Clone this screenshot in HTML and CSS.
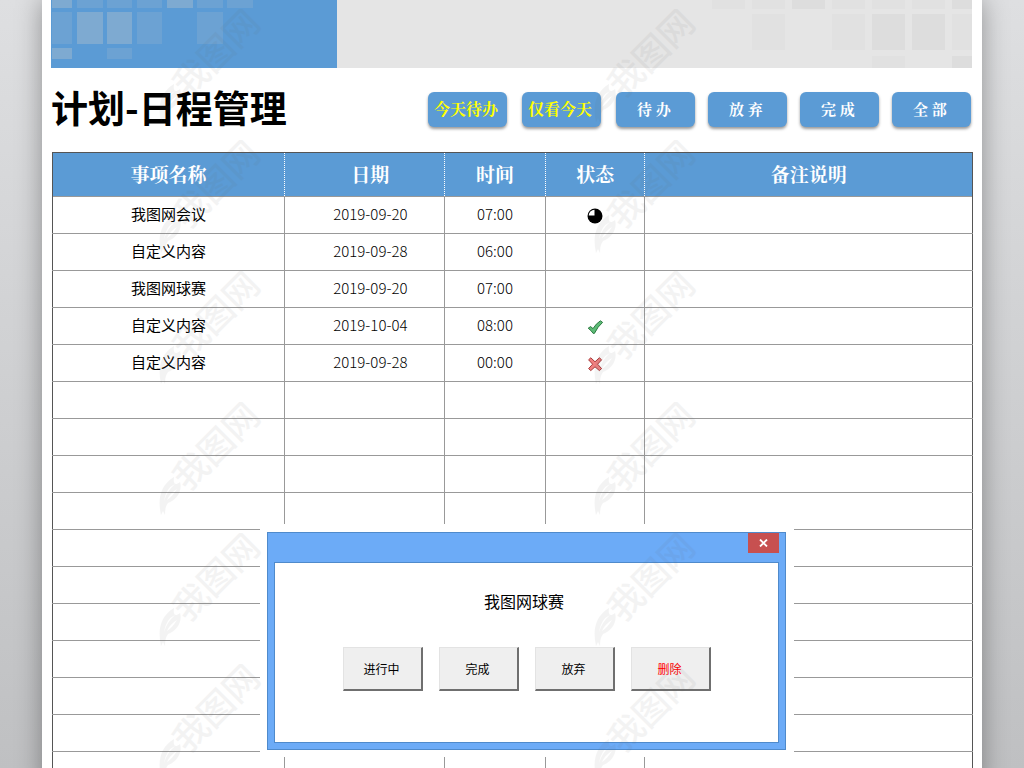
FILE: index.html
```html
<!DOCTYPE html>
<html lang="zh-CN">
<head>
<meta charset="utf-8">
<title>计划-日程管理</title>
<link rel="stylesheet" href="styles.css">
</head>
<body>
<div class="page">
  <main class="sheet">
    <div class="banner">
      <div class="banner-main">
        <svg class="tiles" width="204" height="68" viewBox="0 0 204 68" fill="#b9c4cc" aria-hidden="true">
          <g opacity=".38"><rect x="1" y="0" width="20" height="8"/><rect x="26" y="12" width="26" height="32"/><rect x="56" y="12" width="25" height="32"/><rect x="116" y="0" width="26" height="8"/><rect x="1" y="48" width="20" height="11"/></g>
          <g opacity=".18"><rect x="1" y="12" width="20" height="32"/><rect x="26" y="0" width="26" height="8"/><rect x="56" y="0" width="25" height="8"/><rect x="86" y="0" width="25" height="8"/><rect x="86" y="12" width="25" height="32"/><rect x="146" y="0" width="26" height="8"/><rect x="176" y="0" width="26" height="8"/><rect x="146" y="12" width="26" height="32"/><rect x="56" y="48" width="25" height="11"/></g>
        </svg>
      </div>
      <div class="banner-side">
        <svg class="tiles" width="260" height="68" viewBox="0 0 260 68" aria-hidden="true">
          <g fill="#e1e1e1"><rect x="0" y="0" width="33" height="9"/><rect x="40" y="14" width="33" height="36"/><rect x="40" y="0" width="33" height="9"/><rect x="120" y="0" width="33" height="9"/><rect x="120" y="14" width="33" height="36"/><rect x="160" y="0" width="33" height="9"/><rect x="160" y="56" width="33" height="12"/><rect x="200" y="0" width="33" height="9"/><rect x="240" y="14" width="20" height="36"/></g>
          <g fill="#dddddd"><rect x="80" y="0" width="33" height="9"/><rect x="160" y="14" width="33" height="36"/><rect x="200" y="14" width="33" height="36"/><rect x="240" y="0" width="20" height="9"/><rect x="240" y="56" width="20" height="12"/></g>
        </svg>
      </div>
    </div>
    <header class="head">
      <h1 class="title">计划-日程管理</h1>
      <div class="filters">
        <button class="filter today" type="button">今天待办</button>
        <button class="filter today" type="button">仅看今天</button>
        <button class="filter" type="button">待 办</button>
        <button class="filter" type="button">放 弃</button>
        <button class="filter" type="button">完 成</button>
        <button class="filter" type="button">全 部</button>
      </div>
    </header>
    <table class="plan">
      <colgroup><col class="c-name"><col class="c-date"><col class="c-time"><col class="c-state"><col class="c-note"></colgroup>
      <thead><tr><th>事项名称</th><th class="date">日期</th><th>时间</th><th>状态</th><th>备注说明</th></tr></thead>
      <tbody>
        <tr><td>我图网会议</td><td class="num date">2019-09-20</td><td class="num">07:00</td><td><svg class="state" viewBox="0 0 16 16" role="img" aria-label="进行中"><circle cx="8" cy="8" r="7.5"/><path d="M7.5 7.5V1.7A6 6 0 0 0 1.7 7.5z" fill="#fff"/></svg></td><td></td></tr>
        <tr><td>自定义内容</td><td class="num date">2019-09-28</td><td class="num">06:00</td><td></td><td></td></tr>
        <tr><td>我图网球赛</td><td class="num date">2019-09-20</td><td class="num">07:00</td><td></td><td></td></tr>
        <tr><td>自定义内容</td><td class="num date">2019-10-04</td><td class="num">08:00</td><td><svg class="state" viewBox="0 0 16 16" role="img" aria-label="完成"><path d="M1.2 9.2L3.6 7.6 6 9.6Q9 4.6 13.4 1.8L15.6 3.4Q10.6 7.6 7.4 14.4H6.2Q4 11.2 1.2 9.2z" fill="#5dbb77" stroke="#2c7a41" stroke-linejoin="round"/></svg></td><td></td></tr>
        <tr><td>自定义内容</td><td class="num date">2019-09-28</td><td class="num">00:00</td><td><svg class="state" viewBox="0 0 16 16" role="img" aria-label="放弃"><path d="M3.8 1.8L8 5.8 12.4 1.8 14.6 3.8 10.6 8.2 14.6 12.6 12.4 14.6 8 10.8 3.8 14.6 1.6 12.6 5.6 8.2 1.6 3.8z" fill="#f08080" stroke="#a83a3a" stroke-linejoin="round"/></svg></td><td></td></tr>
        <tr><td></td><td></td><td></td><td></td><td></td></tr>
        <tr><td></td><td></td><td></td><td></td><td></td></tr>
        <tr><td></td><td></td><td></td><td></td><td></td></tr>
        <tr><td></td><td></td><td></td><td></td><td></td></tr>
        <tr><td></td><td></td><td></td><td></td><td></td></tr>
        <tr><td></td><td></td><td></td><td></td><td></td></tr>
        <tr><td></td><td></td><td></td><td></td><td></td></tr>
        <tr><td></td><td></td><td></td><td></td><td></td></tr>
        <tr><td></td><td></td><td></td><td></td><td></td></tr>
        <tr><td></td><td></td><td></td><td></td><td></td></tr>
        <tr><td></td><td></td><td></td><td></td><td></td></tr>
      </tbody>
    </table>
  </main>

  <div class="dialog-mat">
    <section class="dialog" role="dialog" aria-labelledby="dialog-name">
      <div class="dialog-bar">
        <button class="close" type="button" aria-label="关闭"><svg width="9" height="8" viewBox="0 0 9 8" aria-hidden="true"><path d="M1 .5L8 7.5M8 .5L1 7.5" stroke="#fff" stroke-width="1.8"/></svg></button>
      </div>
      <div class="dialog-body">
        <h2 class="dialog-name" id="dialog-name">我图网球赛</h2>
        <div class="actions">
          <button class="action" type="button">进行中</button>
          <button class="action" type="button">完成</button>
          <button class="action" type="button">放弃</button>
          <button class="action danger" type="button">删除</button>
        </div>
      </div>
    </section>
  </div>

  <svg width="0" height="0" class="defs" aria-hidden="true">
    <symbol id="mark" viewBox="0 0 104 116">
      <text class="mark-text" x="57" y="57" text-anchor="middle" transform="rotate(-45 57 44)">我图网</text>
      <path d="M2 113C-1 99 0 84 15 75C14 82 16 84 21 80C24 90 16 99 9 101C6 105 6 109 6 113L4 109zM5 99Q8 89 16 82Q7 86 5 99zM8 98Q13 95 18 87Q11 91 8 98z" fill-rule="evenodd"/>
    </symbol>
  </svg>
  <div class="marks" aria-hidden="true">
    <svg class="mark"><use href="#mark"/></svg><svg class="mark"><use href="#mark"/></svg>
    <svg class="mark"><use href="#mark"/></svg><svg class="mark"><use href="#mark"/></svg>
    <svg class="mark"><use href="#mark"/></svg><svg class="mark"><use href="#mark"/></svg>
    <svg class="mark"><use href="#mark"/></svg><svg class="mark"><use href="#mark"/></svg>
    <svg class="mark"><use href="#mark"/></svg><svg class="mark"><use href="#mark"/></svg>
    <svg class="mark"><use href="#mark"/></svg><svg class="mark"><use href="#mark"/></svg>
  </div>
</div>
</body>
</html>
```

FILE: styles.css
```css
* { box-sizing: border-box; }

body {
  margin: 0;
  font-family: "Noto Sans CJK SC", sans-serif;
  color: #000;
}

.page {
  position: relative;
  height: 100vh;
  overflow: hidden;
  padding: 0 42px;
  background: linear-gradient(#dedfe1, #bfc0c2);
}

.sheet {
  min-height: 100%;
  padding: 0 9px;
  background: #fff;
  box-shadow: 0 0 24px rgba(0, 0, 0, .35);
}

.banner {
  display: flex;
  height: 68px;
  margin-right: 1px;
}

.banner-main {
  flex: 0 0 31%;
  background: #5b9bd5;
}

.banner-side {
  flex: 1;
  display: flex;
  justify-content: flex-end;
  background: #e5e5e5;
}

.tiles { display: block; }

.head {
  display: flex;
  justify-content: space-between;
  align-items: center;
  height: 84px;
  padding: 0 2px 2px 0;
}

.title {
  margin: 0;
  padding-bottom: 4px;
  font-size: 37px;
  line-height: 48px;
  font-weight: 700;
}

.filters {
  display: flex;
  gap: 13px;
}

.filter {
  width: 79px;
  height: 35px;
  padding: 0 3px 0 0;
  border: 0;
  border-radius: 6px;
  background: #5b9bd5;
  box-shadow: 0 2px 3px rgba(0, 0, 0, .4);
  color: #fff;
  font: 700 15px/24px "Noto Serif CJK SC", "Noto Sans CJK SC", serif;
}

.today {
  margin-right: 2px;
  color: #ff0;
  font-size: 16px;
}

.plan {
  width: calc(100% - 1px);
  margin-left: 1px;
  border-collapse: collapse;
  table-layout: fixed;
  border: 1px solid #555;
}

.c-name { width: 25.2%; }
.c-date { width: 17.4%; }
.c-time { width: 11%; }
.c-state { width: 10.8%; }
.c-note { width: 35.6%; }

.plan th {
  height: 44px;
  padding: 0 0 2px;
  border-right: 1px dotted #fff;
  background: #5b9bd5;
  color: #fff;
  font: 700 19px/28px "Noto Serif CJK SC", "Noto Sans CJK SC", serif;
}

.plan td {
  height: 37px;
  padding: 0 0 2px;
  border: 1px solid #999;
  text-align: center;
  font-size: 15px;
  line-height: 22px;
}

.plan .date { padding-left: 12px; }

.plan th:last-child,
.plan td:last-child { border-right-color: #555; border-right-style: solid; }
.plan td:first-child { border-left-color: #555; }

.plan .num { font-weight: 300; }

.state {
  display: block;
  width: 16px;
  height: 16px;
  margin: 4px auto 0;
}

.dialog-mat {
  position: absolute;
  top: 524px;
  left: calc(50% - 252px);
  width: 534px;
  padding: 8px 8px 7px 7px;
  background: #fff;
}

.dialog {
  padding: 0 6px 6px;
  border: 1px solid #4f8acb;
  background: #6cabf7;
}

.dialog-bar {
  display: flex;
  justify-content: flex-end;
  height: 29px;
}

.close {
  display: grid;
  place-items: center;
  width: 31px;
  height: 20px;
  padding: 0;
  border: 0;
  background: #c75050;
}

.dialog-body {
  padding: 26px 67px 51px 68px;
  border: 1px solid #4f8acb;
  background: #fff;
}

.dialog-name {
  margin: 0 0 34px;
  padding-right: 6px;
  font-size: 16px;
  line-height: 24px;
  font-weight: 400;
  text-align: center;
}

.actions {
  display: flex;
  justify-content: space-between;
}

.action {
  width: 80px;
  height: 44px;
  padding: 0 2px 0 0;
  border: solid;
  border-width: 1px 2px 2px 1px;
  border-color: #e3e3e3 #6f6f6f #6f6f6f #e3e3e3;
  background: #efefef;
  color: #000;
  font: 400 12px/18px "Noto Sans CJK SC", sans-serif;
}

.danger { color: #f00; }

.defs { position: absolute; }

.marks {
  position: absolute;
  inset: 0;
  display: grid;
  grid-template-columns: repeat(2, 435px);
  grid-auto-rows: 131px;
  padding: 9px 0 0 159px;
  overflow: hidden;
  pointer-events: none;
}

.mark {
  width: 104px;
  height: 116px;
  fill: #666;
  opacity: .07;
}

.mark-text {
  font-size: 35px;
  font-weight: 500;
}
```
